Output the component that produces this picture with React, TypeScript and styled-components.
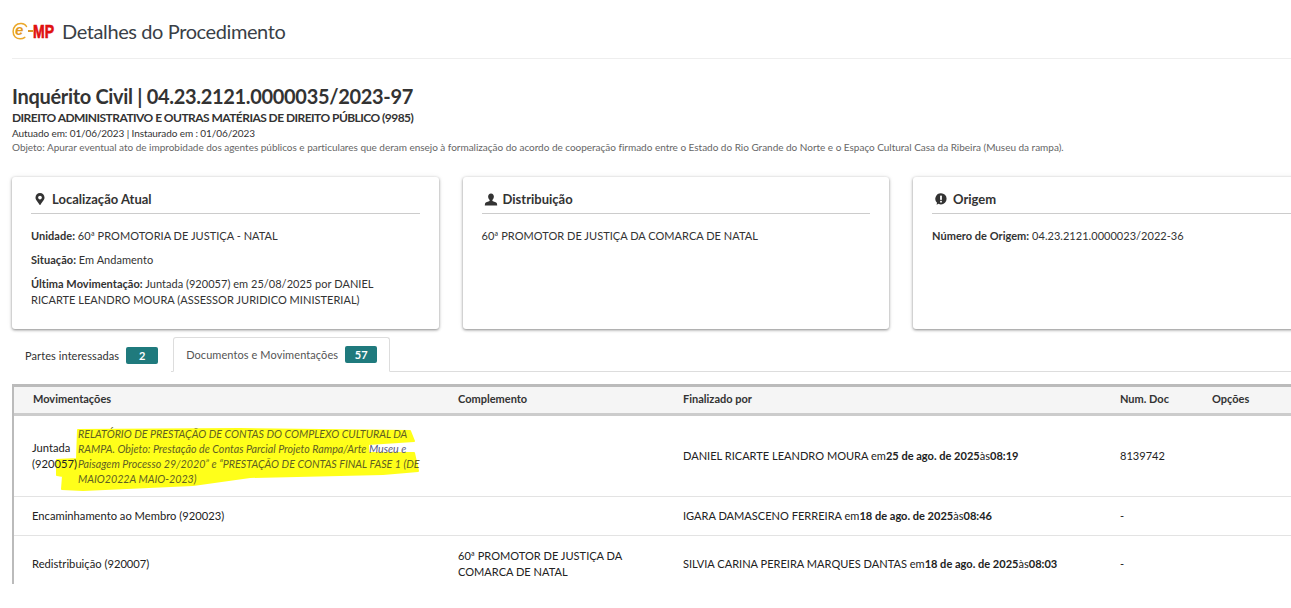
import React from "react";
import styled, { createGlobalStyle } from "styled-components";
import { FaMapMarkerAlt } from "react-icons/fa";

const Global = createGlobalStyle`
  html, body { margin: 0; padding: 0; background: #fff; overflow: hidden; }
  body { font-family: Lato, "Open Sans", sans-serif; color: #333; font-size: 12px; }
  * { box-sizing: border-box; }
`;
const Page = styled.div`
  width: 1291px;
  height: 584px;
  overflow: hidden;
  padding-left: 12px;
`;
const TopBar = styled.header`
  height: 59px;
  border-bottom: 1px solid #eee;
  display: flex;
  align-items: center;
  gap: 6px;
  padding-top: 4px;
`;
const PageTitle = styled.h1`
  margin: 0;
  font-size: 20px;
  letter-spacing: -0.4px;
  font-weight: 400;
  color: #3a3f47;
`;
const Summary = styled.section`
  padding-top: 25px;
`;
const ProcTitle = styled.h2`
  margin: 0 0 2px;
  font-size: 20px;
  letter-spacing: -0.32px;
  line-height: 24px;
  font-weight: 700;
  color: #333;
`;
const Subject = styled.div`
  font-size: 12px;
  letter-spacing: -0.54px;
  line-height: 16px;
  font-weight: 700;
  color: #333;
`;
const Dates = styled.div`
  font-size: 10px;
  letter-spacing: -0.09px;
  line-height: 14px;
  color: #333;
`;
const Objective = styled.div`
  font-size: 10px;
  letter-spacing: -0.02px;
  line-height: 14px;
  color: #666;
`;
const Cards = styled.div`
  display: flex;
  gap: 24px;
  margin-top: 23px;
  width: 1400px;
`;
const Card = styled.article`
  flex: 0 0 426.5px;
  height: 152px;
  background: #fff;
  border-radius: 3px;
  padding: 12px 19px;
  box-shadow: 0 1px 3px rgba(0, 0, 0, 0.45), 0 0 6px rgba(0, 0, 0, 0.06);
`;
const CardHead = styled.h3`
  margin: 0 0 14px;
  height: 25px;
  display: flex;
  align-items: center;
  gap: 6px;
  padding: 0 0 4px 3px;
  font-size: 13px;
  font-weight: 700;
  color: #333;
  border-bottom: 1px solid #ccc;
  svg { width: 12px; height: 12px; color: #333; flex: none; }
`;
const Field = styled.p`
  margin: 0 0 8px;
  padding-right: 30px;
  font-size: 11px;
  letter-spacing: 0.03px;
  line-height: 16px;
  color: #333;
  b { font-weight: 700; }
`;
const Tabs = styled.nav`
  display: flex;
  align-items: flex-end;
  height: 35px;
  margin-top: 8px;
  border-bottom: 1px solid #ddd;
`;
const Tab = styled.div<{ $active?: boolean }>`
  height: ${(p) => (p.$active ? "35px" : "34px")};
  margin-bottom: -1px;
  margin-right: 2px;
  display: flex;
  align-items: center;
  gap: 7px;
  padding: 0 12px;
  font-size: 11px;
  letter-spacing: 0.08px;
  color: ${(p) => (p.$active ? "#555" : "#333")};
  background: #fff;
  border: 1px solid ${(p) => (p.$active ? "#ddd" : "transparent")};
  border-bottom-color: ${(p) => (p.$active ? "#fff" : "transparent")};
  border-radius: 3px 3px 0 0;
`;
const Badge = styled.span`
  width: 32px;
  height: 17px;
  display: flex;
  align-items: center;
  justify-content: center;
  background: #1f7a7d;
  color: #fff;
  border-radius: 2px;
  font-size: 11px;
  font-weight: 700;
`;
const Table = styled.table`
  margin-top: 12px;
  width: 1279px;
  table-layout: fixed;
  border-collapse: separate;
  border-spacing: 0;
  border-left: 2px solid #bbb;
`;
const Th = styled.th`
  height: 32px;
  padding: 0 0 3px 19px;
  text-align: left;
  font-size: 11px;
  font-weight: 700;
  color: #333;
  background: #f5f5f5;
  border-top: 3px solid #bbb;
  border-bottom: 3px solid #ccc;
`;
const Td = styled.td`
  padding: 0 0 0 19px;
  font-size: 11.05px;
  line-height: 16px;
  color: #222;
  border-bottom: 1px solid #e3e3e3;
  vertical-align: middle;
  b { font-weight: 700; }
`;
const NameTd = styled(Td)`
  padding-left: 18px;
  font-size: 11.2px;
`;
const FirstRow = styled.tr`
  height: 81px;
`;
const SecondRow = styled.tr`
  height: 39px;
`;
const ThirdRow = styled.tr`
  height: 56px;
`;
const MoveCell = styled.div`
  position: relative;
  display: flex;
  align-items: center;
`;
const MoveName = styled.span`
  position: relative;
  flex: 0 0 46px;
  line-height: 16px;
`;
const MoveNote = styled.em`
  position: relative;
  width: 345px;
  font-size: 10.7px;
  line-height: 15px;
  color: #5f5f22;
`;
const BlueNote = styled.span`
  color: #56567e;
`;
const Highlight = styled.svg`
  position: absolute;
  left: -32px;
  top: -425px;
  width: 1291px;
  height: 608px;
  pointer-events: none;
`;
const Logo = styled.svg`
  flex: none;
  display: block;
  overflow: visible;
`;

const EmpLogo = () => (
  <Logo width="44" height="18" viewBox="0 0 44 18" aria-label="e-MP">
    <path d="M14.5 4.5C12.5 1 6.5 .6 3.4 3.6 .4 6.6 .4 12.5 3.2 15c2.800 2.400 7 2.200 9.600 .4" fill="none" stroke="#eba82b" strokeWidth="1.5" strokeLinecap="round" />
    <text x="3" y="13" fontFamily="Liberation Sans" fontStyle="italic" fontWeight="700" fontSize="15" fill="#e39a1c">e</text>
    <rect x="16" y="8" width="5" height="2" fill="#d9962a" />
    <text x="21" y="16" fontFamily="Liberation Sans" fontWeight="700" fontSize="19" fill="#e01010" textLength="21" lengthAdjust="spacingAndGlyphs" stroke="#e01010" strokeWidth="0.7">MP</text>
  </Logo>
);

const UserGlyph = () => (
  <svg viewBox="0 0 14 14" fill="currentColor" style={{ width: 14, height: 13, marginRight: -1, marginLeft: -1 }}>
    <path d="M7 .5c-2 0-3.100 1.400-3.100 3.400 0 1.500.7 2.900 1.600 3.700v1C4 9.200 1.200 9.800.6 11.200L.3 13.500h13.400l-.3-2.300C12.800 9.800 10 9.200 8.500 8.600v-1c.9-.8 1.600-2.200 1.600-3.700C10.100 1.900 9 .5 7 .5z" />
  </svg>
);

const OriginGlyph = () => (
  <svg viewBox="0 0 12 12">
    <path d="M6 .2a5.600 5.600 0 0 1 0 11.200c-.9 0-1.800-.2-2.500-.6L1.600 11.800l.4-2A5.600 5.600 0 0 1 6 .2z" fill="currentColor" />
    <rect x="5.100" y="2.600" width="1.800" height="4.300" rx=".6" fill="#fff" />
    <rect x="5.100" y="7.800" width="1.800" height="1.700" rx=".5" fill="#fff" />
  </svg>
);

export default function App() {
  return (
    <Page>
      <Global />
      <TopBar>
        <EmpLogo />
        <PageTitle>Detalhes do Procedimento</PageTitle>
      </TopBar>
      <Summary>
        <ProcTitle>Inquérito Civil | 04.23.2121.0000035/2023-97</ProcTitle>
        <Subject>DIREITO ADMINISTRATIVO E OUTRAS MATÉRIAS DE DIREITO PÚBLICO (9985)</Subject>
        <Dates>Autuado em: 01/06/2023 | Instaurado em : 01/06/2023</Dates>
        <Objective>
          Objeto: Apurar eventual ato de improbidade dos agentes públicos e particulares que deram ensejo à formalização do acordo de cooperação firmado entre o Estado do Rio Grande do Norte e o Espaço Cultural Casa da Ribeira (Museu da rampa).
        </Objective>
      </Summary>
      <Cards>
        <Card>
          <CardHead><FaMapMarkerAlt />Localização Atual</CardHead>
          <Field><b>Unidade:</b> 60ª PROMOTORIA DE JUSTIÇA - NATAL</Field>
          <Field><b>Situação:</b> Em Andamento</Field>
          <Field><b>Última Movimentação:</b> Juntada (920057) em 25/08/2025 por DANIEL RICARTE LEANDRO MOURA (ASSESSOR JURIDICO MINISTERIAL)</Field>
        </Card>
        <Card>
          <CardHead><UserGlyph />Distribuição</CardHead>
          <Field>60ª PROMOTOR DE JUSTIÇA DA COMARCA DE NATAL</Field>
        </Card>
        <Card>
          <CardHead><OriginGlyph />Origem</CardHead>
          <Field><b>Número de Origem:</b> 04.23.2121.0000023/2022-36</Field>
        </Card>
      </Cards>
      <Tabs>
        <Tab>Partes interessadas <Badge>2</Badge></Tab>
        <Tab $active>Documentos e Movimentações <Badge>57</Badge></Tab>
      </Tabs>
      <Table>
        <colgroup>
          <col style={{ width: 425 }} />
          <col style={{ width: 225 }} />
          <col style={{ width: 437 }} />
          <col style={{ width: 92 }} />
          <col />
        </colgroup>
        <thead>
          <tr>
            <Th>Movimentações</Th>
            <Th>Complemento</Th>
            <Th>Finalizado por</Th>
            <Th>Num. Doc</Th>
            <Th>Opções</Th>
          </tr>
        </thead>
        <tbody>
          <FirstRow>
            <NameTd>
              <MoveCell>
                <Highlight viewBox="0 0 1291 608">
                  <path d="M78 429 L240 428 L410 430 L414 440 L368 443 L368 452 L414 452 L418 470 L383 473 L250 476 L193 484 L83 489 L62 488 L63 475 L57 474 L57 459 L77 458 Z" fill="#ffff1a" stroke="#ffff1a" strokeWidth="2" strokeLinejoin="round" />
                </Highlight>
                <MoveName>Juntada (920057)</MoveName>
                <MoveNote>RELATÓRIO DE PRESTAÇÃO DE CONTAS DO COMPLEXO CULTURAL DA RAMPA. Objeto: Prestação de Contas Parcial Projeto Rampa/Arte <BlueNote>Museu e</BlueNote> Paisagem Processo 29/2020” e “PRESTAÇÃO DE CONTAS FINAL FASE 1 (DE MAIO2022A MAIO-2023)</MoveNote>
              </MoveCell>
            </NameTd>
            <Td />
            <Td>DANIEL RICARTE LEANDRO MOURA em<b>25 de ago. de 2025</b>às<b>08:19</b></Td>
            <Td>8139742</Td>
            <Td />
          </FirstRow>
          <SecondRow>
            <NameTd>Encaminhamento ao Membro (920023)</NameTd>
            <Td />
            <Td>IGARA DAMASCENO FERREIRA em<b>18 de ago. de 2025</b>às<b>08:46</b></Td>
            <Td>-</Td>
            <Td />
          </SecondRow>
          <ThirdRow>
            <NameTd>Redistribuição (920007)</NameTd>
            <Td>60ª PROMOTOR DE JUSTIÇA DA COMARCA DE NATAL</Td>
            <Td>SILVIA CARINA PEREIRA MARQUES DANTAS em<b>18 de ago. de 2025</b>às<b>08:03</b></Td>
            <Td>-</Td>
            <Td />
          </ThirdRow>
        </tbody>
      </Table>
    </Page>
  );
}
